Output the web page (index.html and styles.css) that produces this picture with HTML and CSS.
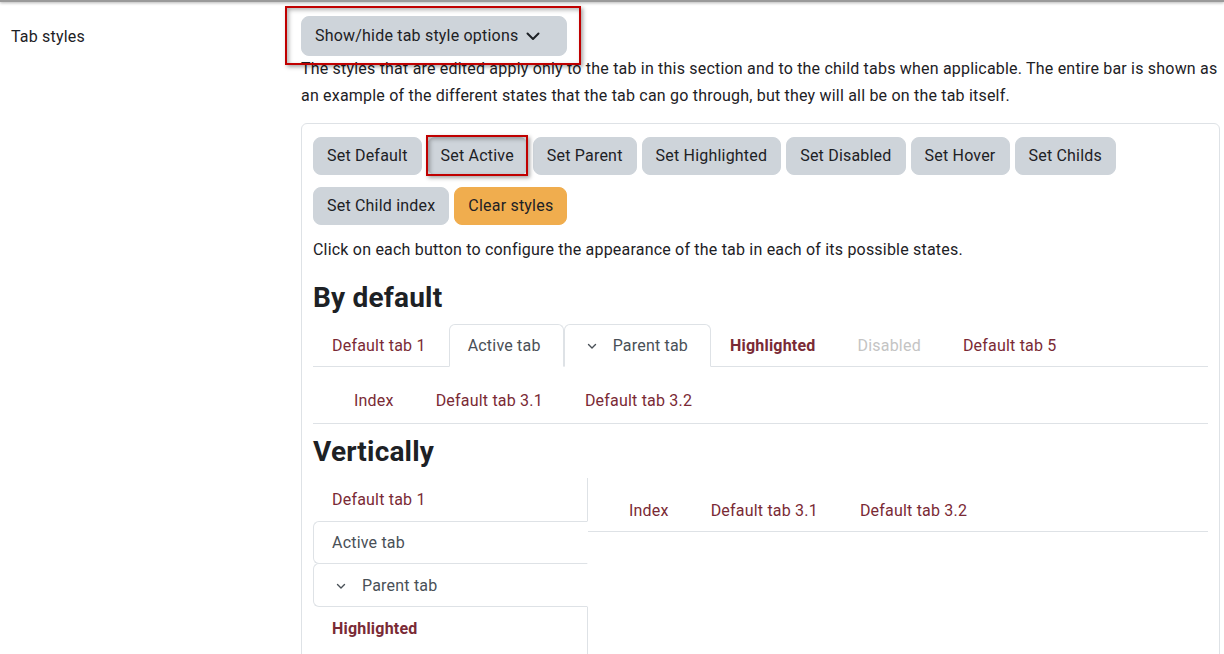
FILE: index.html
```html
<!DOCTYPE html>
<html lang="en">
<head>
    <meta charset="UTF-8">
    <title>Tab styles</title>
    <link rel="stylesheet" href="styles.css">
</head>
<body>
    <div class="topbar"></div>

    <div class="setting">
        <div class="setting-label">Tab styles</div>
        <div class="setting-body">
            <button class="btn btn-toggle">Show/hide tab style options
                <svg class="chev" width="16" height="16" viewBox="0 0 16 16"><path d="M2.5 5.5 8 11l5.5-5.5" fill="none" stroke="#1d2125" stroke-width="2" stroke-linecap="round" stroke-linejoin="round"/></svg>
            </button>
            <p class="desc">The styles that are edited apply only to the tab in this section and to the child tabs when applicable. The entire bar is shown as an example of the different states that the tab can go through, but they will all be on the tab itself.</p>

            <div class="card">
                <div class="btn-row">
                    <button class="btn">Set Default</button>
                    <button class="btn">Set Active</button>
                    <button class="btn">Set Parent</button>
                    <button class="btn">Set Highlighted</button>
                    <button class="btn">Set Disabled</button>
                    <button class="btn">Set Hover</button>
                    <button class="btn">Set Childs</button>
                    <button class="btn">Set Child index</button>
                    <button class="btn btn-warning">Clear styles</button>
                </div>
                <p class="hint">Click on each button to configure the appearance of the tab in each of its possible states.</p>

                <h3>By default</h3>
                <ul class="tabs">
                    <li><a class="tab">Default tab 1</a></li>
                    <li><a class="tab active">Active tab</a></li>
                    <li><a class="tab active"><svg class="mini-chev" width="12" height="12" viewBox="0 0 12 12"><path d="M2.5 4.5 6 8l3.5-3.5" fill="none" stroke="#495057" stroke-width="1.4" stroke-linecap="round" stroke-linejoin="round"/></svg>Parent tab</a></li>
                    <li><a class="tab highlighted">Highlighted</a></li>
                    <li><a class="tab disabled">Disabled</a></li>
                    <li><a class="tab">Default tab 5</a></li>
                </ul>
                <ul class="subtabs">
                    <li><a class="subtab">Index</a></li>
                    <li><a class="subtab">Default tab 3.1</a></li>
                    <li><a class="subtab">Default tab 3.2</a></li>
                </ul>

                <h3 class="h-vert">Vertically</h3>
                <div class="vertical">
                    <ul class="vtabs">
                        <li><a class="vtab">Default tab 1</a></li>
                        <li><a class="vtab active">Active tab</a></li>
                        <li><a class="vtab active parent"><svg class="mini-chev" width="12" height="12" viewBox="0 0 12 12"><path d="M2.5 4.5 6 8l3.5-3.5" fill="none" stroke="#495057" stroke-width="1.4" stroke-linecap="round" stroke-linejoin="round"/></svg>Parent tab</a></li>
                        <li><a class="vtab highlighted">Highlighted</a></li>
                    </ul>
                    <div class="vcontent">
                        <ul class="subtabs">
                            <li><a class="subtab">Index</a></li>
                            <li><a class="subtab">Default tab 3.1</a></li>
                            <li><a class="subtab">Default tab 3.2</a></li>
                        </ul>
                    </div>
                </div>
            </div>
        </div>
    </div>

    <div class="mark mark-toggle"></div>
    <div class="mark mark-active"></div>
</body>
</html>
```

FILE: styles.css
```css
body {
    margin: 0;
    font-family: Roboto, "Liberation Sans", sans-serif;
    font-size: 16px;
    letter-spacing: 0.2px;
    color: #1d2125;
    background: #fff;
    overflow: hidden;
}
.topbar {
    height: 2px;
    background: #9a9a9a;
    box-shadow: 0 1px 3px rgba(0,0,0,.35);
}
.setting {
    display: flex;
    padding: 14px 4px 0 11px;
}
.setting-label {
    width: 290px;
    flex-shrink: 0;
    line-height: 42px;
}
.setting-body {
    flex: 1;
}
.btn {
    font-family: inherit;
    font-size: 16px;
    letter-spacing: 0.2px;
    line-height: 24px;
    color: #1d2125;
    background: #ced4da;
    border: 1px solid #ced4da;
    border-radius: 8px;
    padding: 6px 13px;
    cursor: pointer;
}
.btn-toggle {
    display: inline-flex;
    align-items: center;
    gap: 7px;
    padding: 7px 25px 7px 13px;
}
.chev {
    display: block;
}
.btn-warning {
    background: #f0ad4e;
    border-color: #f0ad4e;
}
.desc {
    margin: -1px 0 14px;
    line-height: 27px;
}
.card {
    border: 1px solid #dee2e6;
    border-radius: 6px;
    padding: 13px 11px 0 11px;
    height: 600px;
}
.btn-row {
    display: flex;
    flex-wrap: wrap;
    gap: 12px 5px;
}
.hint {
    margin: 13px 0 19px;
    line-height: 24px;
}
h3 {
    font-size: 28px;
    font-weight: 700;
    line-height: 34px;
    margin: 0 0 9px;
}
.h-vert {
    margin: 11px 0 9px;
}
ul {
    list-style: none;
    margin: 0;
    padding: 0;
}
.tabs {
    display: flex;
    border-bottom: 1px solid #dee2e6;
}
.tab, .vtab {
    display: flex;
    align-items: center;
    padding: 8px 22px 8px 18px;
    line-height: 25px;
    color: #7a2a35;
    border: 1px solid transparent;
}
.tab {
    margin-bottom: -1px;
    border-radius: 6px 6px 0 0;
}
.tab.active {
    color: #495057;
    border-color: #dee2e6 #dee2e6 #fff;
    background: #fff;
}
.mini-chev {
    margin: 0 15px 0 3px;
}
.highlighted {
    font-weight: 700;
}
.disabled {
    color: #c4c4c4;
}
.subtabs {
    display: flex;
    padding: 12px 0 0 20px;
    border-bottom: 1px solid #dee2e6;
}
.subtab {
    display: block;
    padding: 10px 21px;
    line-height: 24px;
    color: #7a2a35;
}
.vertical {
    display: flex;
}
.vtabs {
    width: 274px;
    flex-shrink: 0;
    border-right: 1px solid #dee2e6;
    height: 300px;
}
.vtab {
    margin-right: -1px;
    border-radius: 6px 0 0 6px;
}
.vtab.active {
    color: #495057;
    border-color: #dee2e6 #fff #dee2e6 #dee2e6;
    background: #fff;
}
.vtab.parent {
    margin-top: -1px;
    padding-top: 9px;
}
.vcontent {
    flex: 1;
}
.vcontent .subtabs {
    padding-top: 12px;
}
.vcontent .subtab {
    padding: 9px 21px 8px;
}
.mark {
    position: absolute;
    border: 2px solid #c00000;
    box-shadow: 2px 2px 4px rgba(0,0,0,.35), inset 2px 2px 4px rgba(0,0,0,.3);
}
.mark-toggle {
    left: 285px;
    top: 6px;
    width: 292px;
    height: 55px;
}
.mark-active {
    left: 426px;
    top: 135px;
    width: 98px;
    height: 37px;
}
```
